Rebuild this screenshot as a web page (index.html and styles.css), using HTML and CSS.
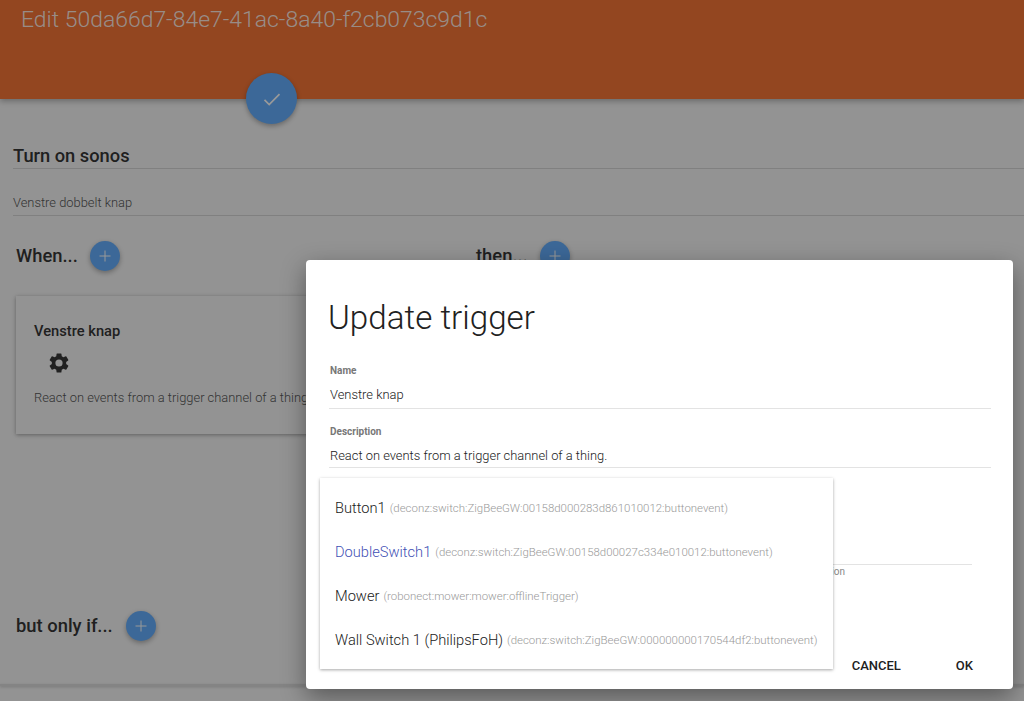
FILE: index.html
```html
<!DOCTYPE html>
<html lang="en">
<head>
<meta charset="utf-8">
<title>Edit rule</title>
<link rel="stylesheet" href="styles.css">
</head>
<body>
<div class="page">
  <header class="topbar">
    <h1 class="topbar-title">Edit 50da66d7-84e7-41ac-8a40-f2cb073c9d1c</h1>
    <button class="fab fab-large save" aria-label="Save">
      <svg width="24" height="24" viewBox="0 0 24 24"><path d="M4.5 12.8 9.2 17.5 19.5 7.2" fill="none" stroke="#fff" stroke-width="1.7"/></svg>
    </button>
  </header>
  <main class="content">
    <div class="rule-name">Turn on sonos</div>
    <div class="rule-desc">Venstre dobbelt knap</div>
    <div class="columns">
      <section class="col col-when">
        <div class="section-head">
          <h2 class="section-title">When...</h2>
          <button class="fab fab-small" aria-label="Add"><svg width="14" height="14" viewBox="0 0 14 14"><path d="M7 1.5V12.5M1.5 7H12.5" stroke="#fff" stroke-width="1" fill="none"/></svg></button>
        </div>
        <div class="card">
          <h3 class="card-title">Venstre knap</h3>
          <svg class="card-icon" width="24" height="24" viewBox="0 0 24 24"><path fill="#383838" d="M19.14 12.94c.04-.3.06-.61.06-.94s-.02-.64-.07-.94l2.03-1.58a.49.49 0 0 0 .12-.61l-1.92-3.32a.49.49 0 0 0-.59-.22l-2.39.96a7 7 0 0 0-1.62-.94l-.36-2.54a.48.48 0 0 0-.48-.41h-3.84a.47.47 0 0 0-.47.41l-.36 2.54c-.59.24-1.13.57-1.62.94l-2.39-.96a.49.49 0 0 0-.59.22L2.74 8.87a.48.48 0 0 0 .12.61l2.03 1.58c-.05.3-.09.63-.09.94s.02.64.07.94l-2.03 1.58a.49.49 0 0 0-.12.61l1.92 3.32c.12.22.37.29.59.22l2.39-.96c.5.38 1.03.7 1.62.94l.36 2.54c.05.24.24.41.48.41h3.84c.24 0 .44-.17.47-.41l.36-2.54c.59-.24 1.13-.56 1.62-.94l2.39.96c.22.08.47 0 .59-.22l1.92-3.32a.48.48 0 0 0-.12-.61l-2.01-1.58zM12 15.6A3.6 3.6 0 1 1 12 8.4a3.6 3.6 0 0 1 0 7.2z"/></svg>
          <p class="card-text">React on events from a trigger channel of a thing.</p>
        </div>
        <div class="section-head section-if">
          <h2 class="section-title">but only if...</h2>
          <button class="fab fab-small" aria-label="Add"><svg width="14" height="14" viewBox="0 0 14 14"><path d="M7 1.5V12.5M1.5 7H12.5" stroke="#fff" stroke-width="1" fill="none"/></svg></button>
        </div>
      </section>
      <section class="col col-then">
        <div class="section-head">
          <h2 class="section-title">then...</h2>
          <button class="fab fab-small" aria-label="Add"><svg width="14" height="14" viewBox="0 0 14 14"><path d="M7 1.5V12.5M1.5 7H12.5" stroke="#fff" stroke-width="1" fill="none"/></svg></button>
        </div>
      </section>
    </div>
    <div class="page-rule"></div>
  </main>
</div>
<div class="overlay"></div>
<div class="dialog">
  <h2 class="dialog-title">Update trigger</h2>
  <div class="field">
    <div class="field-label">Name</div>
    <div class="field-value">Venstre knap</div>
  </div>
  <div class="field">
    <div class="field-label">Description</div>
    <div class="field-value">React on events from a trigger channel of a thing.</div>
  </div>
  <div class="hidden-field">
    <div class="hidden-hint">Select the channel that should trigger this action</div>
  </div>
  <div class="dialog-actions">
    <button class="action">CANCEL</button>
    <button class="action">OK</button>
  </div>
  <ul class="menu">
    <li class="menu-item">Button1 <small>(deconz:switch:ZigBeeGW:00158d000283d861010012:buttonevent)</small></li>
    <li class="menu-item is-selected">DoubleSwitch1 <small>(deconz:switch:ZigBeeGW:00158d00027c334e010012:buttonevent)</small></li>
    <li class="menu-item">Mower <small>(robonect:mower:mower:offlineTrigger)</small></li>
    <li class="menu-item">Wall Switch 1 (PhilipsFoH) <small>(deconz:switch:ZigBeeGW:000000000170544df2:buttonevent)</small></li>
  </ul>
</div>
</body>
</html>
```
FILE: styles.css
```css
* { box-sizing: border-box; }
html, body { margin: 0; height: 100%; overflow: hidden; }
body { font-family: Roboto, "Liberation Sans", sans-serif; background: #f5f5f5; color: #363636; }
h1, h2, h3, p, ul { margin: 0; padding: 0; }
button { font-family: inherit; border: 0; padding: 0; background: none; }

.page { height: 701px; }
.topbar { position: relative; height: 99px; background: #f57536; box-shadow: 0 2px 6px rgba(0,0,0,.3); padding: 6px 21px; }
.topbar-title { font-size: 22.95px; line-height: 28px; font-weight: 300; color: rgba(255,255,255,.87); white-space: nowrap; }

.fab { display: flex; align-items: center; justify-content: center; border-radius: 50%; background: #64aefd; box-shadow: 0 2px 5px rgba(0,0,0,.3); }
.fab-large { width: 51px; height: 51px; }
.save { position: absolute; left: 246px; top: 73px; }
.fab-small { width: 30px; height: 30px; flex: none; }

.content { padding: 45px 0 0 13px; }
.rule-name { height: 25px; font-size: 18.3px; line-height: 24px; font-weight: 500; border-bottom: 1px solid #d6d6d6; }
.rule-desc { margin-top: 22px; height: 25px; font-size: 12.9px; line-height: 16px; padding-top: 4px; color: #555; font-weight: 300; border-bottom: 1px solid #d6d6d6; }
.columns { display: flex; padding: 25px 0 0 3px; height: 469px; }
.col-when { width: 460px; }
.section-head { display: flex; align-items: center; gap: 12px; height: 30px; }
.section-title { font-size: 18.4px; font-weight: 500; line-height: 24px; }
.card { margin-top: 25px; height: 138px; width: 440px; background: #f5f5f5; box-shadow: 0 1px 4px rgba(0,0,0,.35); padding: 26px 18px; }
.card-title { font-size: 14.7px; line-height: 18px; font-weight: 500; }
.card-icon { display: block; margin: 11px 0 0 13px; }
.card-text { margin-top: 15px; font-size: 12.9px; line-height: 16px; color: #555; font-weight: 300; white-space: nowrap; }
.section-if { margin-top: 177px; gap: 13px; }
.page-rule { height: 2px; margin: -1px 0 0 -13px; background: #dcdcdc; box-shadow: 0 1px 3px rgba(0,0,0,.2); }

.overlay { position: absolute; inset: 0; background: rgba(0,0,0,.4); }

.dialog { position: absolute; left: 306px; top: 260px; width: 707px; height: 429px; background: #fff; border-radius: 4px; box-shadow: 0 8px 24px rgba(0,0,0,.4); padding: 38px 22px 0 23px; display: flex; flex-direction: column; }
.dialog-title { font-size: 33.2px; line-height: 40px; font-weight: 300; color: #212121; margin-left: -1px; }
.field { border-bottom: 1px solid #e3e3e3; padding: 0 0 0 1px; }
.dialog-title + .field { margin-top: 12px; height: 59px; }
.field + .field { height: 59px; padding-top: 2px; }
.field-label { font-size: 10px; line-height: 12px; font-weight: 700; color: #777; padding-top: 15px; height: 27px; }
.field-value { font-size: 12.9px; line-height: 16px; font-weight: 300; color: #212121; margin-top: 10px; }
.hidden-field { margin-top: 96px; height: 20px; width: 643px; border-top: 1px solid #e3e3e3; }
.hidden-hint { font-size: 10px; line-height: 12px; color: #888; text-align: right; padding-top: 1px; width: 516px; white-space: nowrap; }
.dialog-actions { display: flex; justify-content: flex-end; gap: 55px; margin-top: 74px; padding-right: 18px; }
.action { font-size: 13px; line-height: 16px; font-weight: 500; color: #212121; }

.menu { position: absolute; left: 14px; top: 218px; width: 513px; height: 191px; background: #fff; box-shadow: 0 1px 3px rgba(0,0,0,.35); list-style: none; padding: 8px 15px 0; }
.menu-item { height: 44px; display: flex; align-items: center; gap: 4px; font-size: 14.65px; font-weight: 300; color: #212121; white-space: nowrap; }
.menu-item small { font-size: 11.45px; color: #999; font-weight: 300; }
.menu-item.is-selected { color: #3f51b5; }
```
